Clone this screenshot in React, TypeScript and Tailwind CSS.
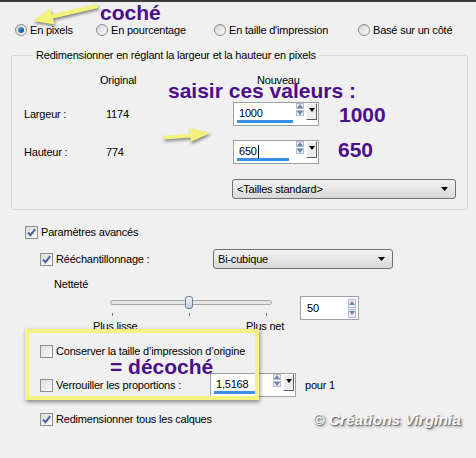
import React from 'react';

function Radio({ checked, label }: { checked?: boolean; label: string }) {
  return (
    <div className="flex items-center gap-[3px]">
      <span className="flex h-[12px] w-[12px] items-center justify-center rounded-full border border-[#8b8b8b] bg-linear-to-br from-[#d6d6d6] to-[#fbfbfb]">
        {checked && <span className="h-[6px] w-[6px] rounded-full bg-linear-to-br from-[#5ab0ef] to-[#0b3b75]" />}
      </span>
      <span>{label}</span>
    </div>
  );
}

function Check({ checked }: { checked?: boolean }) {
  return (
    <span className="flex h-[13px] w-[13px] shrink-0 items-center justify-center border border-[#8e8f8f] bg-linear-to-br from-[#dcdcdc] to-[#fcfcfc]">
      {checked && (
        <svg width="11" height="11" viewBox="0 0 11 11">
          <path d="M2 5.5 L4.5 8.2 L9.2 2.2" fill="none" stroke="#4a5f99" strokeWidth="1.9" />
        </svg>
      )}
    </span>
  );
}

function SpinArrows({ h = 6 }: { h?: number }) {
  const half = h === 6 ? 'h-[6px]' : 'h-[9px]';
  return (
    <div className="flex flex-col gap-px">
      <span className={`flex w-[8px] items-center justify-center border border-[#b3bccc] bg-[#e8ecf3] ${half}`}>
        <svg width="6" height="4" viewBox="0 0 6 4"><path d="M0 4 L3 0 L6 4 Z" fill="#6b85b5" /></svg>
      </span>
      <span className={`flex w-[8px] items-center justify-center border border-[#b3bccc] bg-[#e8ecf3] ${half}`}>
        <svg width="6" height="4" viewBox="0 0 6 4"><path d="M0 0 L3 4 L6 0 Z" fill="#6b85b5" /></svg>
      </span>
    </div>
  );
}

function DropBtn() {
  return (
    <span className="flex h-[17px] w-[11px] items-start justify-center border border-t-white border-l-white border-r-[#5f5f5f] border-b-[#5f5f5f] bg-[#ececec] pt-[4px]">
      <svg width="6" height="4" viewBox="0 0 6 4"><path d="M0 0 L3 4 L6 0 Z" fill="#000" /></svg>
    </span>
  );
}

function SpinField({ value, barClass, caret }: { value: string; barClass: string; caret?: boolean }) {
  return (
    <div className="flex h-[24px] w-[86px] shrink-0 items-start border border-[#a0a0a0] bg-white">
      <div className="flex h-full w-[61px] flex-col pl-[5px] pt-[4px]">
        <div className="flex h-[13px] items-center leading-none">
          {value}
          {caret && <span className="ml-px h-[13px] w-px bg-black" />}
        </div>
        <div className={`mb-[2px] ml-[-2px] mt-auto h-[3px] bg-[#3990e6] ${barClass}`} />
      </div>
      <div className="ml-px">
        <SpinArrows />
      </div>
      <div className="ml-[2px]">
        <DropBtn />
      </div>
    </div>
  );
}

function Combo({ label, className }: { label: string; className: string }) {
  return (
    <div className={`flex h-[20px] items-center justify-between rounded-[3px] border border-[#707070] bg-linear-to-b from-[#f3f3f3] to-[#d9d9d9] pl-[4px] pr-[7px] ${className}`}>
      <span>{label}</span>
      <svg width="7" height="4" viewBox="0 0 7 4"><path d="M0 0 L3.5 4 L7 0 Z" fill="#000" /></svg>
    </div>
  );
}

const NOTE = "absolute whitespace-nowrap font-['Liberation_Sans',Arial,sans-serif] text-[21px] font-bold leading-none tracking-normal text-[#4b0e8c]";

export default function App() {
  return (
    <div className="relative h-[458px] w-[476px] overflow-hidden bg-[#f0f0f0] font-['Liberation_Sans',Arial,sans-serif] text-[11px] leading-[14px] tracking-[-0.2px] text-black">
      <div className="h-[2px] bg-[#3b3b3b]" />

      {/* mode radios */}
      <div className="mt-[20px] flex h-[16px] items-center pl-[15px]">
        <div className="w-[81px]"><Radio checked label="En pixels" /></div>
        <div className="w-[118px]"><Radio label="En pourcentage" /></div>
        <div className="w-[144px]"><Radio label="En taille d'impression" /></div>
        <Radio label="Basé sur un côté" />
      </div>

      {/* size group */}
      <fieldset className="ml-[11px] mt-[10px] w-[457px] rounded-[3px] border border-[#d5d9dd] pb-[10px] pl-[12px]">
        <legend className="ml-[9px] px-[3px] leading-[14px]">Redimensionner en réglant la largeur et la hauteur en pixels</legend>
        <div className="mt-[11px] flex h-[14px] items-center">
          <span className="w-[76px]" />
          <span className="w-[157px]">Original</span>
          <span>Nouveau</span>
        </div>
        <div className="mt-[15px] flex h-[24px] items-center">
          <span className="w-[82px]">Largeur :</span>
          <span className="w-[127px]">1174</span>
          <SpinField value="1000" barClass="w-[56px]" />
        </div>
        <div className="mt-[14px] flex h-[24px] items-center">
          <span className="w-[82px]">Hauteur :</span>
          <span className="w-[127px]">774</span>
          <SpinField value="650" barClass="w-[52px]" caret />
        </div>
        <div className="mt-[15px] pl-[208px]">
          <Combo label="<Tailles standard>" className="w-[224px]" />
        </div>
      </fieldset>

      {/* advanced */}
      <div className="ml-[25px] mt-[14px] flex h-[16px] items-center gap-[3px]">
        <Check checked />
        <span>Paramètres avancés</span>
      </div>
      <div className="mt-[8px] flex h-[22px] items-center">
        <div className="ml-[40px] flex w-[173px] items-center gap-[3px]">
          <Check checked />
          <span>Rééchantillonnage :</span>
        </div>
        <Combo label="Bi-cubique" className="w-[180px]" />
      </div>
      <div className="ml-[54px] mt-[7px] h-[14px]">Netteté</div>

      <div className="mt-[5px] flex h-[24px] items-start">
        <div className="ml-[110px] w-[162px]">
          <div className="relative h-[13px]">
            <div className="absolute left-0 right-0 top-[4px] h-[5px] rounded-full border border-[#a8a8a8] bg-[#e4e4e4]" />
            <div className="absolute left-[75px] top-0 h-[13px] w-[8px] rounded-[3px] border border-[#6b7b9b] bg-linear-to-b from-[#f4f6fb] to-[#c3cde0]" />
          </div>
          <div className="mt-[4px] flex justify-between pl-[2px] pr-[5px]">
            <span className="h-[3px] w-px bg-[#777]" />
            <span className="h-[3px] w-px bg-[#777]" />
            <span className="h-[3px] w-px bg-[#777]" />
          </div>
        </div>
        <div className="ml-[28px] flex h-[24px] w-[59px] items-center justify-between border border-[#a0a0a0] bg-white pl-[6px] pr-[2px]">
          <span>50</span>
          <SpinArrows h={9} />
        </div>
      </div>
      <div className="flex h-[12px] items-center leading-[12px]">
        <span className="ml-[93px] w-[153px]">Plus lisse</span>
        <span>Plus net</span>
      </div>

      <div className="ml-[40px] mt-[11px] flex h-[16px] items-center gap-[3px]">
        <Check />
        <span>Conserver la taille d’impression d’origine</span>
      </div>
      <div className="mt-[14px] flex h-[24px] items-center">
        <div className="ml-[40px] flex w-[170px] items-center gap-[3px]">
          <Check />
          <span>Verrouiller les proportions :</span>
        </div>
        <SpinField value="1,5168" barClass="w-[44px]" />
        <span className="ml-[9px]">pour 1</span>
      </div>
      <div className="ml-[40px] mt-[14px] flex h-[16px] items-center gap-[3px]">
        <Check checked />
        <span>Redimensionner tous les calques</span>
      </div>

      {/* annotations */}
      <div className="pointer-events-none absolute left-[25px] top-[329px] h-[71px] w-[234px] border-[4px] border-[#f6f383] shadow-[1px_2px_4px_rgba(0,0,0,0.45)]" />
      <svg className="pointer-events-none absolute left-0 top-0 [filter:drop-shadow(1px_2px_1.5px_rgba(0,0,0,0.45))]" width="476" height="458">
        <path d="M97 4 L98 8 L53 18.5 L54.5 24.5 L33 21 L50 8.5 L51.5 14.2 Z" fill="#f3f27c" />
        <path d="M163 136 L190 134 L189.5 128 L210 133 L190.7 142 L190.2 137.6 L163.5 139.5 Z" fill="#f3f27c" />
      </svg>
      <span className={`${NOTE} left-[100px] top-[2px]`}>coché</span>
      <span className={`${NOTE} left-[168px] top-[80px]`}>saisir ces valeurs :</span>
      <span className={`${NOTE} left-[339px] top-[104px]`}>1000</span>
      <span className={`${NOTE} left-[338px] top-[139px]`}>650</span>
      <span className={`${NOTE} left-[110px] top-[356px]`}>= décoché</span>
      <span className="absolute left-[313px] top-[412px] whitespace-nowrap text-[15.5px] font-bold italic leading-none tracking-normal text-[#f7f7f7] [text-shadow:1px_1px_1px_#6a6a6a,2px_2px_3px_rgba(0,0,0,0.35)]">
        © Créations Virginia
      </span>
    </div>
  );
}
